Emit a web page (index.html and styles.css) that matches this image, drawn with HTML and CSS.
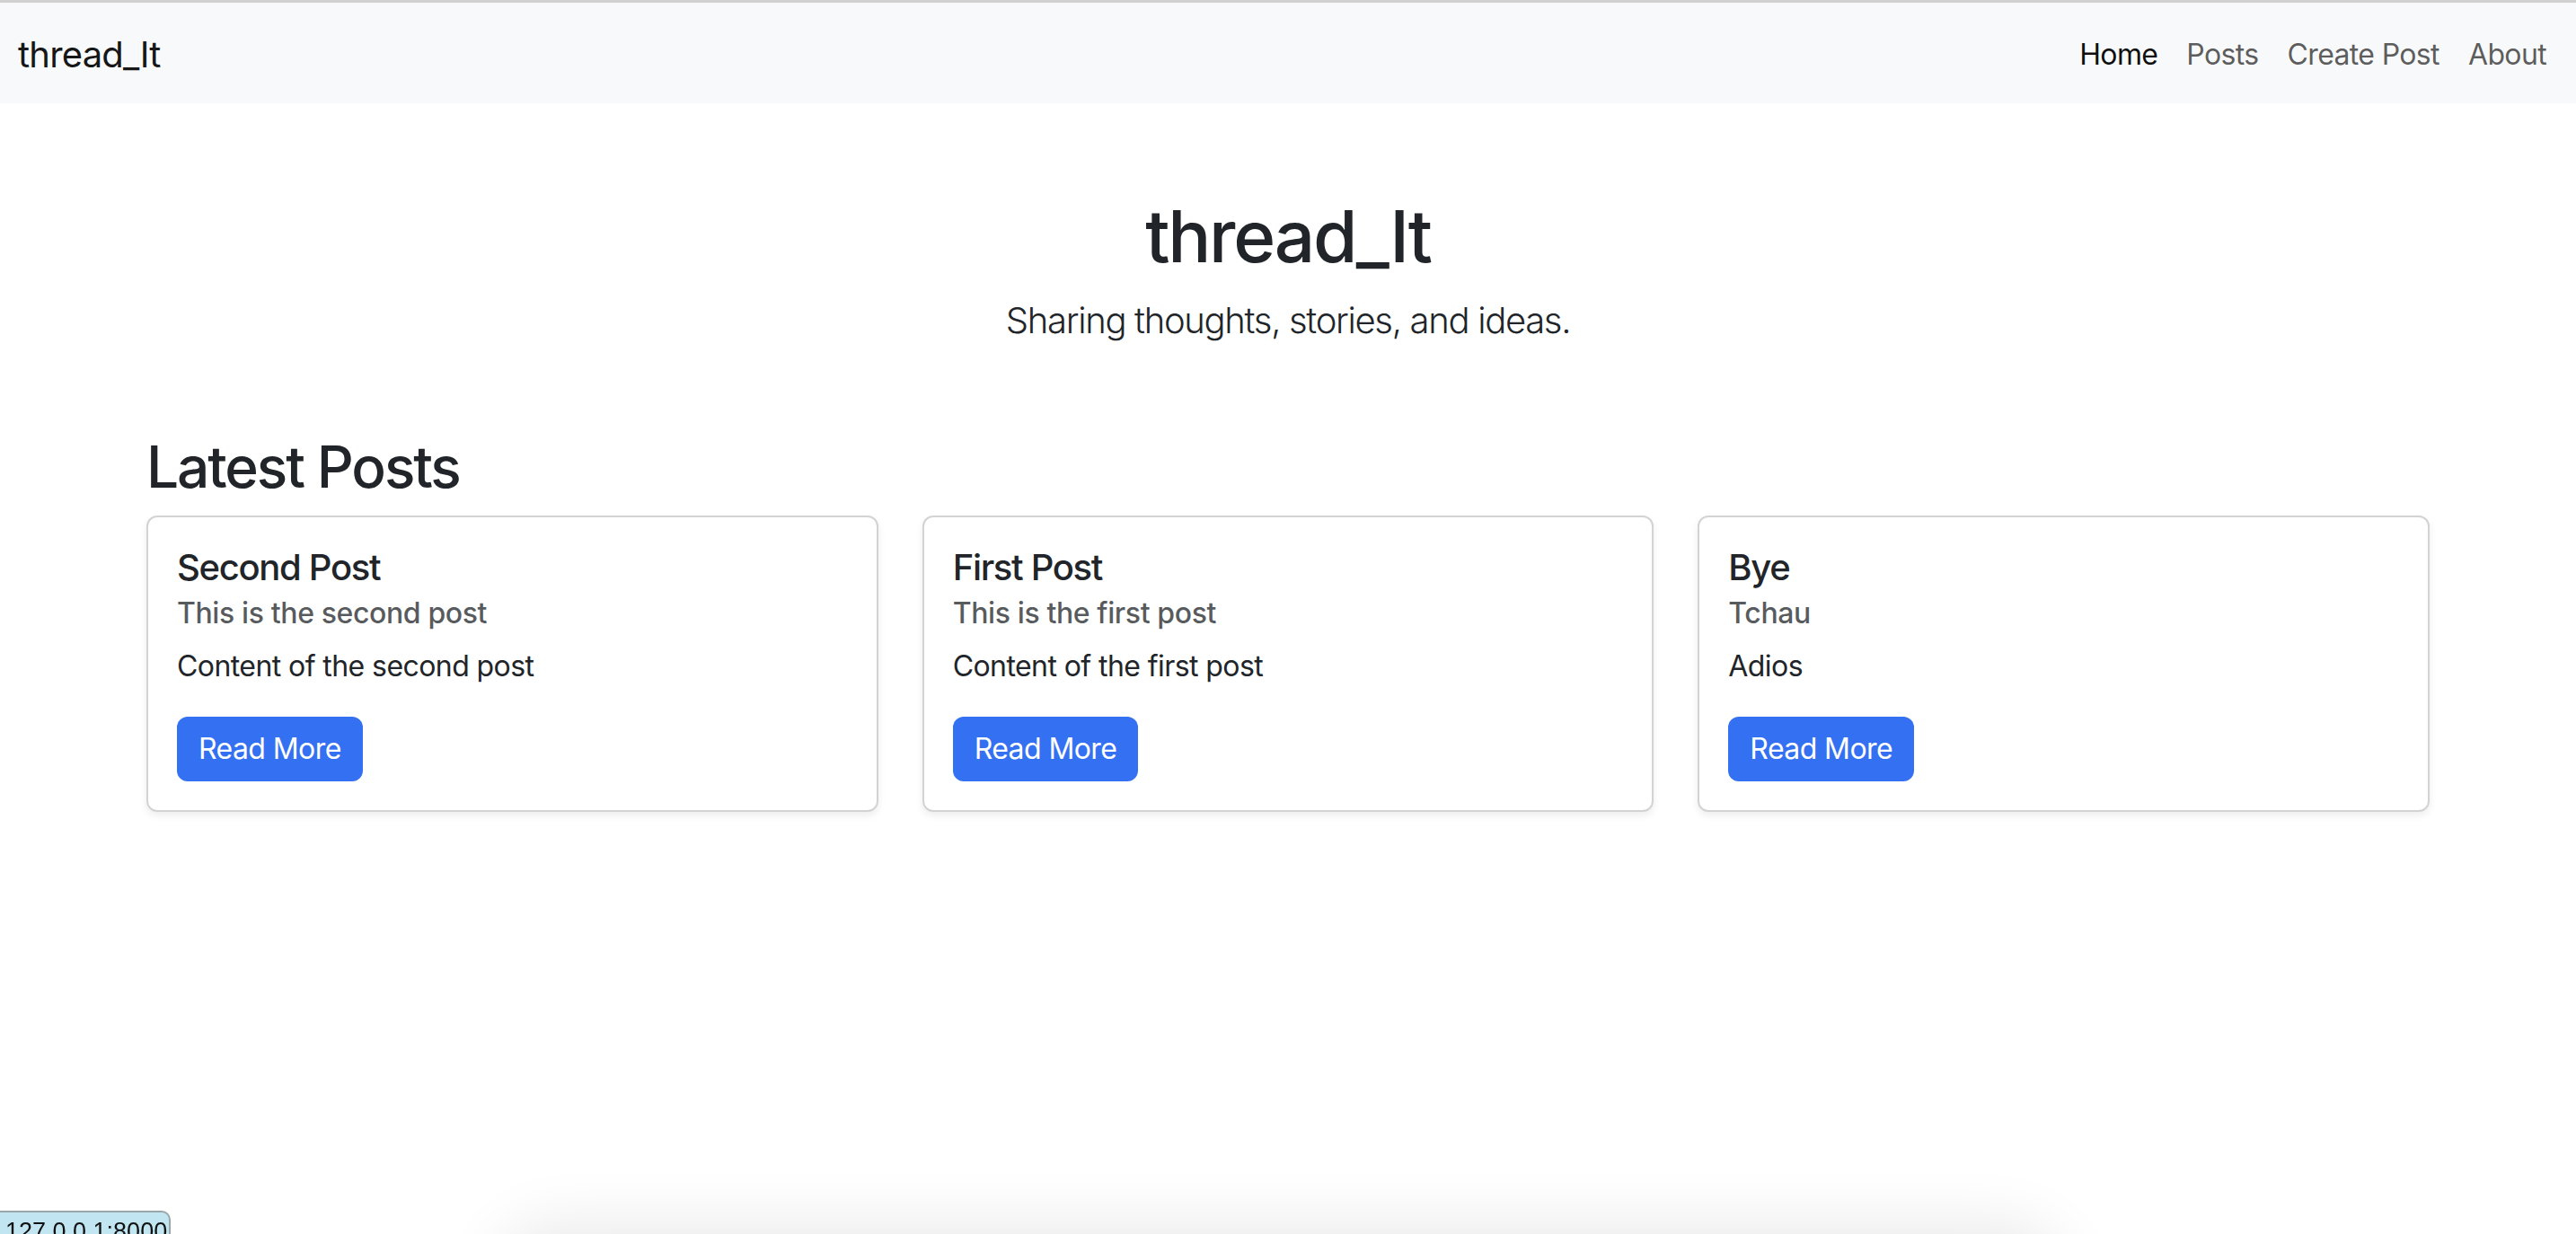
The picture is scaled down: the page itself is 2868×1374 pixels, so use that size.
FILE: index.html
```html
<!DOCTYPE html>
<html lang="en">
<head>
<meta charset="utf-8">
<title>thread_It</title>
<link rel="stylesheet" href="styles.css">
</head>
<body>
<nav class="navbar">
  <a class="brand" href="#">thread_It</a>
  <ul class="nav-links">
    <li><a class="nav-link active" href="#">Home</a></li>
    <li><a class="nav-link" href="#">Posts</a></li>
    <li><a class="nav-link" href="#">Create Post</a></li>
    <li><a class="nav-link" href="#">About</a></li>
  </ul>
</nav>
<main class="container">
  <header class="hero">
    <h1 class="hero-title">thread_It</h1>
    <p class="lead">Sharing thoughts, stories, and ideas.</p>
  </header>
  <section class="posts">
    <h2 class="section-title">Latest Posts</h2>
    <div class="cards">
      <article class="card">
        <h5 class="card-title">Second Post</h5>
        <h6 class="card-subtitle">This is the second post</h6>
        <p class="card-text">Content of the second post</p>
        <a class="btn" href="#">Read More</a>
      </article>
      <article class="card">
        <h5 class="card-title">First Post</h5>
        <h6 class="card-subtitle">This is the first post</h6>
        <p class="card-text">Content of the first post</p>
        <a class="btn" href="#">Read More</a>
      </article>
      <article class="card">
        <h5 class="card-title">Bye</h5>
        <h6 class="card-subtitle">Tchau</h6>
        <p class="card-text">Adios</p>
        <a class="btn" href="#">Read More</a>
      </article>
    </div>
  </section>
</main>
<div class="dock-shadow"></div>
<div class="status">127.0.0.1:8000</div>
</body>
</html>
```
FILE: styles.css
```css
* { box-sizing: border-box; }
html, body { margin: 0; padding: 0; }
body {
  font-family: Inter, "Noto Sans", "Liberation Sans", sans-serif;
  color: #212529;
  background: #fff;
  height: 1374px;
  overflow: hidden;
}
a { text-decoration: none; }

.navbar {
  display: flex;
  align-items: center;
  justify-content: space-between;
  height: 115px;
  border-top: 3px solid #d0d0d0;
  background: #f8f9fa;
  padding: 3px 17px 0 20px;
}
.brand {
  font-size: 40px;
  line-height: 60px;
  letter-spacing: -0.02em;
  color: rgba(0,0,0,0.92);
}
.nav-links {
  display: flex;
  list-style: none;
  margin: 0;
  padding: 0;
}
.nav-link {
  display: block;
  font-size: 32px;
  line-height: 48px;
  letter-spacing: -0.02em;
  padding: 0 16px;
  color: rgba(0,0,0,0.65);
}
.nav-link.active { color: rgba(0,0,0,0.95); }

.container {
  width: 2542px;
  margin: 0 auto;
}
.hero {
  text-align: center;
  padding-top: 100px;
}
.hero-title {
  font-size: 80px;
  line-height: 96px;
  font-weight: 500;
  letter-spacing: -0.028em;
  margin: 0 0 16px;
}
.lead {
  font-size: 40px;
  line-height: 60px;
  font-weight: 300;
  letter-spacing: -0.033em;
  margin: 0;
}
.section-title {
  font-size: 64px;
  line-height: 77px;
  font-weight: 500;
  letter-spacing: -0.033em;
  margin: 94px 0 16px;
}
.cards {
  display: grid;
  grid-template-columns: repeat(3, 1fr);
  gap: 49px;
}
.card {
  border: 2px solid #d3d3d3;
  border-radius: 12px;
  padding: 32px;
  box-shadow: 0 4px 8px rgba(0,0,0,0.075);
  background: #fff;
}
.card-title {
  font-size: 40px;
  line-height: 48px;
  font-weight: 500;
  letter-spacing: -0.033em;
  margin: 0 0 16px;
}
.card-subtitle {
  font-size: 32px;
  line-height: 38px;
  font-weight: 500;
  letter-spacing: -0.012em;
  color: rgba(33,37,41,0.75);
  margin: -8px 0 16px;
}
.card-text {
  font-size: 32px;
  line-height: 48px;
  letter-spacing: -0.018em;
  margin: 0 0 32px;
}
.btn {
  display: inline-block;
  font-size: 32px;
  line-height: 48px;
  letter-spacing: -0.018em;
  padding: 12px 24px;
  border-radius: 12px;
  background: #3470f2;
  color: #fff;
}

.dock-shadow {
  position: fixed;
  left: 560px;
  width: 1730px;
  bottom: -120px;
  height: 120px;
  border-radius: 60px;
  box-shadow: 0 0 70px 10px rgba(0,0,0,0.09);
}
.status {
  position: fixed;
  left: 0;
  bottom: 0;
  height: 26px;
  width: 190px;
  overflow: hidden;
  background: #c2e6f1;
  border: 2px solid #9aa6aa;
  border-left: none;
  border-bottom: none;
  border-radius: 0 10px 0 0;
  padding: 5px 0 0 6px;
  font-family: "Liberation Sans", Arial, sans-serif;
  font-size: 27px;
  line-height: 32px;
  color: #111;
  white-space: nowrap;
}
```
